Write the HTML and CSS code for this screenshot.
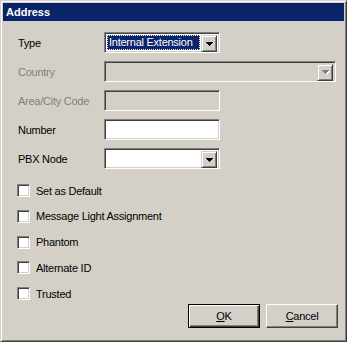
FILE: index.html
```html
<!DOCTYPE html>
<html lang="en">
<head>
    <meta charset="UTF-8">
    <meta name="viewport" content="width=device-width, initial-scale=1.0">
    <title>Address</title>
    <link rel="stylesheet" href="styles.css">
</head>
<body>
    <div class="window">
        <div class="titlebar">Address</div>

        <div class="fields">
            <div class="label">Type</div>
            <div class="combo short">
                <span class="combo-text selected">Internal Extension</span>
                <span class="drop"><svg width="7" height="4" viewBox="0 0 7 4" shape-rendering="crispEdges"><path d="M0 0h7v1h-1v1h-1v1h-1v1h-1v-1h-1v-1h-1v-1h-1z" fill="#000"/></svg></span>
            </div>

            <div class="label disabled">Country</div>
            <div class="combo wide off">
                <span class="combo-text"></span>
                <span class="drop"><svg width="8" height="5" viewBox="0 0 8 5" shape-rendering="crispEdges"><path d="M1 1h7v1h-1v1h-1v1h-1v1h-1v-1h-1v-1h-1v-1h-1z" fill="#fff"/><path d="M0 0h7v1h-1v1h-1v1h-1v1h-1v-1h-1v-1h-1v-1h-1z" fill="#808080"/></svg></span>
            </div>

            <div class="label disabled">Area/City Code</div>
            <div class="edit short off"></div>

            <div class="label">Number</div>
            <div class="edit short"></div>

            <div class="label">PBX Node</div>
            <div class="combo short">
                <span class="combo-text"></span>
                <span class="drop"><svg width="7" height="4" viewBox="0 0 7 4" shape-rendering="crispEdges"><path d="M0 0h7v1h-1v1h-1v1h-1v1h-1v-1h-1v-1h-1v-1h-1z" fill="#000"/></svg></span>
            </div>
        </div>

        <div class="checks">
            <div class="check"><span class="box"></span>Set as Default</div>
            <div class="check"><span class="box"></span>Message Light Assignment</div>
            <div class="check"><span class="box"></span>Phantom</div>
            <div class="check"><span class="box"></span>Alternate ID</div>
            <div class="check"><span class="box"></span>Trusted</div>
        </div>

        <div class="buttons">
            <div class="button default"><u>O</u>K</div>
            <div class="button"><u>C</u>ancel</div>
        </div>
    </div>
</body>
</html>
```

FILE: styles.css
```css
body {
    margin: 0;
    font-family: "Liberation Sans", Arial, sans-serif;
    font-size: 11px;
    letter-spacing: -0.25px;
    color: #000;
}

.window {
    width: 347px;
    height: 342px;
    box-sizing: border-box;
    background-color: #d4d0c8;
    border: 1px solid;
    border-color: #d4d0c8 #404040 #404040 #d4d0c8;
    box-shadow: inset 1px 1px #fff, inset -1px -1px #808080;
    padding: 2px;
    display: flex;
    flex-direction: column;
}

.titlebar {
    height: 18px;
    line-height: 18px;
    background-color: #0a246a;
    color: #fff;
    font-weight: bold;
    letter-spacing: 0;
    padding-left: 3px;
}

.fields {
    display: grid;
    grid-template-columns: 86px auto;
    grid-auto-rows: 21px;
    row-gap: 8px;
    margin-top: 11px;
    padding-left: 15px;
    justify-items: start;
    align-items: center;
}

.label.disabled {
    color: #808080;
}

.combo,
.edit {
    height: 21px;
    box-sizing: border-box;
    border: 1px solid;
    border-color: #808080 #fff #fff #808080;
    box-shadow: inset 1px 1px #404040, inset -1px -1px #d4d0c8;
    background-color: #fff;
}

.short {
    width: 116px;
}

.wide {
    width: 232px;
}

.off {
    background-color: #d4d0c8;
}

.combo {
    display: flex;
    padding: 2px;
}

.combo-text {
    flex: 1;
    line-height: 15px;
    padding-left: 2px;
    margin-right: 1px;
}

.combo-text.selected {
    background-color: #0a246a;
    color: #fff;
    border: 1px dotted #fffbe8;
    padding-left: 1px;
    line-height: 13px;
}

.drop {
    width: 16px;
    height: 17px;
    box-sizing: border-box;
    background-color: #d4d0c8;
    border: 1px solid;
    border-color: #d4d0c8 #404040 #404040 #d4d0c8;
    box-shadow: inset 1px 1px #fff, inset -1px -1px #808080;
    display: flex;
    justify-content: center;
    align-items: center;
    padding-left: 1px;
}

.drop svg {
    display: block;
}

.checks {
    margin-top: 15px;
    padding-left: 14px;
    display: flex;
    flex-direction: column;
    gap: 12.75px;
}

.check {
    display: flex;
    align-items: center;
    height: 13px;
    gap: 6px;
}

.box {
    width: 13px;
    height: 13px;
    box-sizing: border-box;
    border: 1px solid;
    border-color: #808080 #fff #fff #808080;
    box-shadow: inset 1px 1px #404040, inset -1px -1px #d4d0c8;
    background-color: #fff;
}

.buttons {
    margin-top: auto;
    margin-bottom: 11px;
    display: flex;
    justify-content: flex-end;
    gap: 6px;
    padding-right: 6px;
}

.button {
    width: 72px;
    height: 24px;
    box-sizing: border-box;
    border: 1px solid;
    border-color: #fff #404040 #404040 #fff;
    box-shadow: inset -1px -1px #808080;
    display: flex;
    justify-content: center;
    align-items: center;
}

.button.default {
    border-color: #000;
    box-shadow: inset 1px 1px #fff, inset -1px -1px #404040, inset -2px -2px #808080;
}
```
